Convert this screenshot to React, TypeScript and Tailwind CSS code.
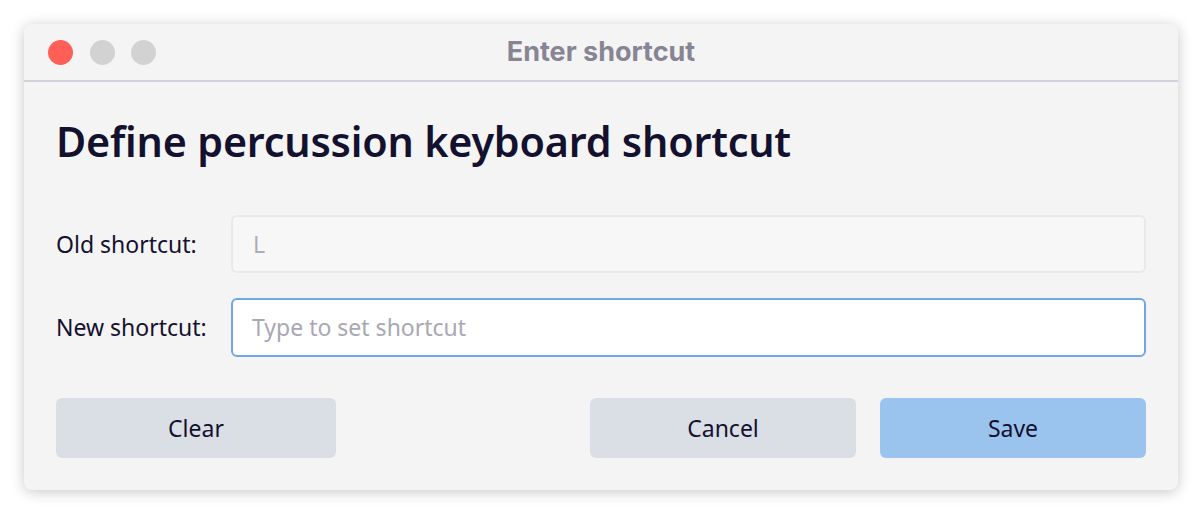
import React from "react";

export default function App() {
  return (
    <div className="w-[1202px] h-[514px] bg-white p-6" style={{ fontFamily: '"Noto Sans", "Open Sans", sans-serif' }}>
      <div className="w-[1154px] h-[466px] bg-[#f4f4f4] rounded-[8px] shadow-[0_2px_14px_rgba(0,0,0,0.22)] flex flex-col overflow-hidden">
        <div className="relative h-[58px] shrink-0 border-b-2 border-[#d0d4da] flex items-center">
          <div className="flex items-center gap-[16.7px] pl-[24px]">
            <span className="w-[25px] h-[25px] rounded-full bg-[#ff5f57]" />
            <span className="w-[25px] h-[25px] rounded-full bg-[#d2d2d2]" />
            <span className="w-[25px] h-[25px] rounded-full bg-[#d2d2d2]" />
          </div>
          <div className="absolute inset-0 flex items-center justify-center pt-[1px] text-[27px] font-bold text-[#878593]" style={{ fontFamily: 'Inter, sans-serif' }}>
            Enter shortcut
          </div>
        </div>
        <div className="flex-1 flex flex-col px-8 pt-[34px]">
          <h1 className="text-[41.3px] leading-[50px] font-semibold text-[#14112f] tracking-[-0.2px]">
            Define percussion keyboard shortcut
          </h1>
          <div className="mt-[49px] flex items-center">
            <label className="w-[175px] text-[23px] text-[#14112f]">Old shortcut:</label>
            <div className="flex-1 h-[58px] bg-[#f7f7f7] border-2 border-[#e9e9e9] rounded-[6px] flex items-center px-[20px] text-[23px] text-[#aeacb8]">
              L
            </div>
          </div>
          <div className="mt-[25px] flex items-center">
            <label className="w-[175px] text-[23px] text-[#14112f]">New shortcut:</label>
            <div className="flex-1 h-[59px] bg-white border-2 border-[#6ea9e6] rounded-[6px] flex items-center px-[19px] text-[23px] text-[#a9a7b4]">
              Type to set shortcut
            </div>
          </div>
          <div className="mt-[41px] flex items-center">
            <button className="w-[280px] h-[60px] rounded-[6px] bg-[#dadee5] text-[23px] text-[#14112f]">Clear</button>
            <div className="flex-1" />
            <button className="w-[266px] h-[60px] rounded-[6px] bg-[#dadee5] text-[23px] text-[#14112f]">Cancel</button>
            <button className="ml-[24px] w-[266px] h-[60px] rounded-[6px] bg-[#9ac4ee] text-[23px] text-[#14112f]">Save</button>
          </div>
        </div>
      </div>
    </div>
  );
}
